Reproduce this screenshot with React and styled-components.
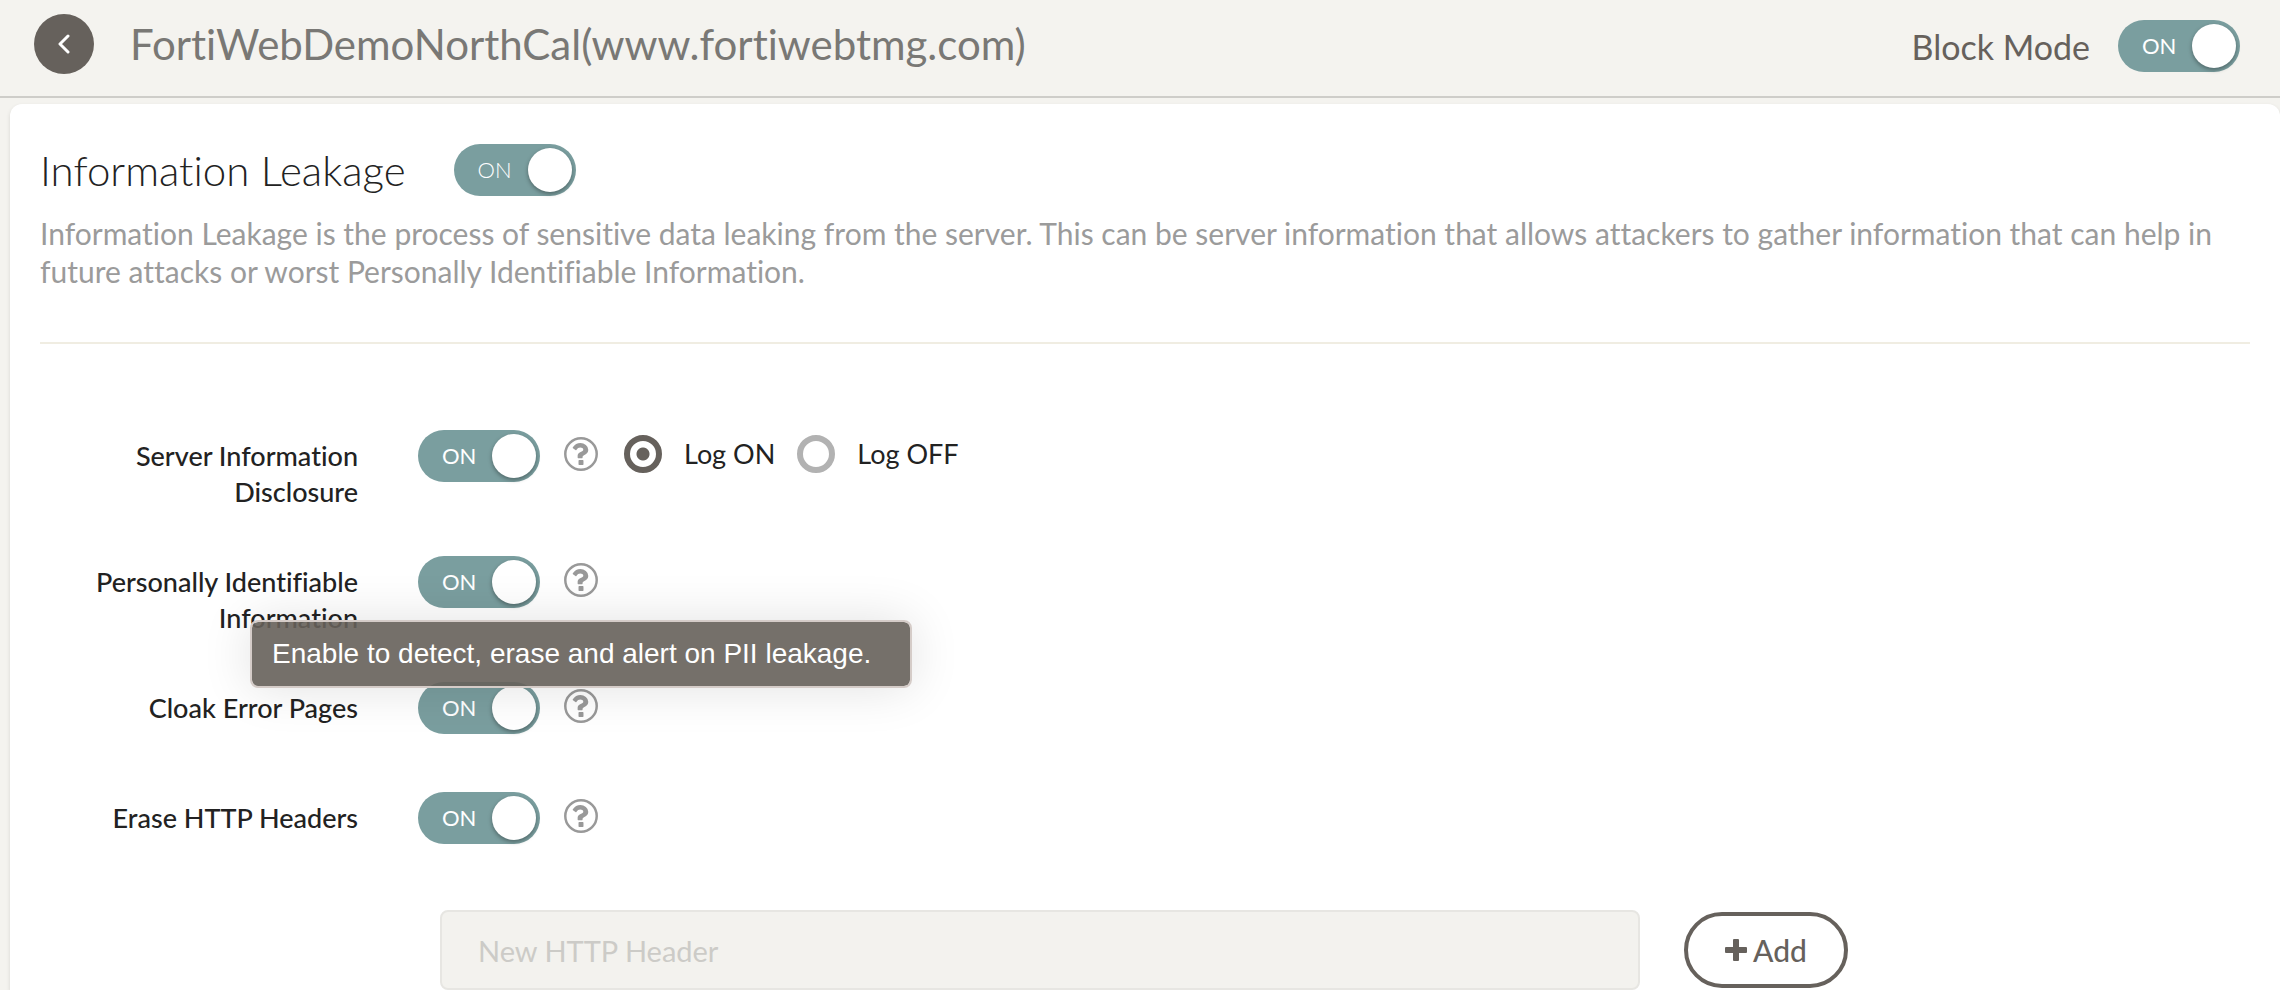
import React, { useState } from 'react'
import styled, { createGlobalStyle } from 'styled-components'

const rows = [
  {
    id: 'server-info',
    label: 'Server Information Disclosure',
    log: true,
  },
  {
    id: 'pii',
    label: 'Personally Identifiable Information',
    tip: 'Enable to detect, erase and alert on PII leakage.',
  },
  { id: 'cloak', label: 'Cloak Error Pages' },
  { id: 'erase', label: 'Erase HTTP Headers' },
]

function Toggle({ id, label, light }) {
  const [on, setOn] = useState(true)
  return (
    <Switch $light={light}>
      <SwitchInput
        type="checkbox"
        role="switch"
        id={id}
        aria-label={label}
        checked={on}
        onChange={() => setOn(!on)}
      />
      <SwitchText>{on ? 'ON' : 'OFF'}</SwitchText>
      <Knob />
    </Switch>
  )
}

function HelpIcon() {
  return (
    <svg viewBox="128 128 1536 1536" aria-hidden="true">
      <circle cx="896" cy="896" r="710" fill="none" stroke="currentColor" strokeWidth="112" />
      <path
        fill="currentColor"
        d="M1008 1200v160q0 14-9 23t-23 9h-160q-14 0-23-9t-9-23v-160q0-14 9-23t23-9h160q14 0 23 9t9 23zm216-496q0 50-15 90t-45.500 69-52 44-59.500 36q-32 18-46.500 28t-26 24-11.500 29v32q0 14-9 23t-23 9h-160q-14 0-23-9t-9-23v-68q0-35 10.500-64.500t24-47.500 39-35.500 41-25.500 44.500-21q53-25 75-43t22-49q0-42-43.500-71.500t-95.500-29.500q-56 0-95 27-29 20-80 83-9 12-25 12-11 0-19-6l-108-82q-10-7-12-20t5-23q122-192 349-192 129 0 238.500 89.500t109.500 214.500z"
      />
    </svg>
  )
}

function App() {
  const [log, setLog] = useState('on')
  const [header, setHeader] = useState('')

  return (
    <>
      <GlobalStyle />
      <Header>
        <BackButton type="button" aria-label="Back">
          <svg width="14" height="20" viewBox="0 0 14 20" aria-hidden="true">
            <path
              d="M11 2 3 10l8 8"
              fill="none"
              stroke="currentColor"
              strokeWidth="3"
              strokeLinecap="round"
              strokeLinejoin="round"
            />
          </svg>
        </BackButton>
        <AppName>FortiWebDemoNorthCal(www.fortiwebtmg.com)</AppName>
        <BlockMode>
          <BlockLabel htmlFor="block-mode">Block Mode</BlockLabel>
          <Toggle id="block-mode" />
        </BlockMode>
      </Header>

      <Panel>
        <TitleRow>
          <Title>Information Leakage</Title>
          <Toggle id="leakage" label="Information Leakage" light />
        </TitleRow>
        <Description>
          Information Leakage is the process of sensitive data leaking from the server. This can be
          server information that allows attackers to gather information that can help in future
          attacks or worst Personally Identifiable Information.
        </Description>

        <Form onSubmit={(e) => e.preventDefault()}>
          {rows.map((row) => (
            <Row key={row.id}>
              <RowLabel htmlFor={row.id}>{row.label}</RowLabel>
              <Controls>
                <Toggle id={row.id} />
                <HelpWrap>
                  <HelpButton type="button" aria-label={'Help: ' + row.label}>
                    <HelpIcon />
                  </HelpButton>
                  {row.tip && <Tooltip role="tooltip">{row.tip}</Tooltip>}
                </HelpWrap>
                {row.log && (
                  <RadioGroup>
                    <RadioLabel>
                      <Radio
                        type="radio"
                        name="log"
                        checked={log === 'on'}
                        onChange={() => setLog('on')}
                      />
                      Log ON
                    </RadioLabel>
                    <RadioLabel>
                      <Radio
                        type="radio"
                        name="log"
                        checked={log === 'off'}
                        onChange={() => setLog('off')}
                      />
                      Log OFF
                    </RadioLabel>
                  </RadioGroup>
                )}
              </Controls>
            </Row>
          ))}
          <AddRow>
            <HeaderInput
              type="text"
              aria-label="New HTTP Header"
              placeholder="New HTTP Header"
              value={header}
              onChange={(e) => setHeader(e.target.value)}
            />
            <AddButton type="submit">
              <svg width="22" height="22" viewBox="0 0 22 22" aria-hidden="true">
                <rect x="8" y="0" width="6" height="22" rx="1" fill="currentColor" />
                <rect x="0" y="8" width="22" height="6" rx="1" fill="currentColor" />
              </svg>
              Add
            </AddButton>
          </AddRow>
        </Form>
      </Panel>
    </>
  )
}

export default App

const GlobalStyle = createGlobalStyle`
  * {
    box-sizing: border-box;
  }
  body {
    margin: 0;
    background: #f4f3ef;
    color: #222;
    font-family: Lato, 'Open Sans', sans-serif;
    font-variant-ligatures: no-common-ligatures;
  }
  button, input {
    font-family: inherit;
  }
`

const Header = styled.header`
  display: flex;
  align-items: center;
  height: 98px;
  padding: 0 40px 8px 34px;
  border-bottom: 2px solid #cecdc9;
`

const BackButton = styled.button`
  display: flex;
  align-items: center;
  justify-content: center;
  width: 60px;
  height: 60px;
  padding: 0;
  border: 0;
  border-radius: 50%;
  background: #66615c;
  color: #fff;
  cursor: pointer;
`

const AppName = styled.h1`
  flex: 1;
  margin: 0 0 0 36px;
  color: #797875;
  font-size: 42px;
  font-weight: 400;
  line-height: 52px;
`

const BlockMode = styled.div`
  display: flex;
  align-items: center;
  gap: 28px;
  padding-top: 4px;
`

const BlockLabel = styled.label`
  padding-top: 2px;
  color: #66615c;
  font-size: 34px;
  line-height: 44px;
`

const Switch = styled.label`
  display: flex;
  flex-shrink: 0;
  align-items: center;
  justify-content: space-between;
  width: 122px;
  height: 52px;
  padding: 0 4px 0 24px;
  border-radius: 26px;
  background: #7a9e9f;
  color: #fff;
  font-size: 22px;
  font-weight: ${(props) => (props.$light ? 300 : 400)};
  cursor: pointer;
`

const SwitchInput = styled.input`
  position: absolute;
  opacity: 0;
  pointer-events: none;
`

const SwitchText = styled.span`
  line-height: 28px;
`

const Knob = styled.span`
  width: 44px;
  height: 44px;
  border-radius: 50%;
  background: #fff;
  box-shadow: 0 2px 4px rgba(0, 0, 0, 0.35);
`

const Panel = styled.main`
  min-height: calc(100vh - 104px);
  margin: 6px 0 0 10px;
  padding: 40px 30px 0;
  border-radius: 12px 12px 0 0;
  background: #fff;
  box-shadow: 0 2px 4px rgba(0, 0, 0, 0.12);
`

const TitleRow = styled.div`
  display: flex;
  align-items: center;
  gap: 48px;
`

const Title = styled.h2`
  margin: 0;
  font-size: 42px;
  font-weight: 300;
  line-height: 52px;
`

const Description = styled.p`
  margin: 0;
  padding: 18px 0 52px;
  border-bottom: 2px solid #f0ede2;
  color: #9b9b9b;
  font-size: 30px;
  line-height: 38px;
`

const Form = styled.form`
  display: flex;
  flex-direction: column;
  gap: 44px;
  padding-top: 86px;
`

const Row = styled.div`
  display: grid;
  grid-template-columns: 318px 1fr;
  column-gap: 60px;
  min-height: 66px;
`

const RowLabel = styled.label`
  padding: 8px 0 2px 20px;
  font-size: 27px;
  font-weight: 500;
  line-height: 36px;
  text-align: right;
`

const Controls = styled.div`
  display: flex;
  align-items: center;
  height: 52px;
`

const HelpWrap = styled.div`
  position: relative;
  margin: 0 26px 4px 24px;
`

const HelpButton = styled.button`
  display: block;
  width: 34px;
  height: 34px;
  padding: 0;
  border: 0;
  background: none;
  color: #999;
  cursor: pointer;

  svg {
    display: block;
  }
`

const Tooltip = styled.div`
  position: absolute;
  top: 57px;
  left: 50%;
  z-index: 1;
  width: 662px;
  padding: 14px 20px;
  border: 2px solid #d5ccc8;
  border-radius: 8px;
  background: rgba(102, 96, 90, 0.9);
  background-clip: padding-box;
  box-shadow: 0 0 50px rgba(0, 0, 0, 0.12);
  color: #fff;
  font-family: 'Liberation Sans', Helvetica, sans-serif;
  font-size: 28px;
  line-height: 36px;
  transform: translateX(-50%);
`

const RadioGroup = styled.div`
  display: flex;
  gap: 22px;
  padding-bottom: 4px;
`

const RadioLabel = styled.label`
  display: flex;
  align-items: center;
  gap: 22px;
  font-size: 27px;
  line-height: 36px;
  cursor: pointer;
`

const Radio = styled.input`
  appearance: none;
  width: 38px;
  height: 38px;
  margin: 0;
  border: 6px solid ${(props) => (props.checked ? '#66615c' : '#b2b2b2')};
  border-radius: 50%;
  background: ${(props) =>
    props.checked ? 'radial-gradient(circle, #66615c 6px, #fff 7px)' : '#fff'};
`

const AddRow = styled.div`
  display: flex;
  align-items: center;
  gap: 44px;
  padding: 8px 0 0 400px;
`

const HeaderInput = styled.input`
  flex: 1;
  max-width: 1200px;
  height: 80px;
  padding: 0 36px;
  border: 2px solid #e7e6e2;
  border-radius: 8px;
  background: #f3f2ee;
  color: #222;
  font-size: 29px;

  &::placeholder {
    color: #cccbc7;
  }
`

const AddButton = styled.button`
  display: flex;
  align-items: center;
  justify-content: center;
  gap: 6px;
  width: 164px;
  height: 76px;
  border: 4px solid #66615c;
  border-radius: 38px;
  background: #fff;
  color: #66615c;
  font-size: 30px;
  font-weight: 500;
  cursor: pointer;
`
